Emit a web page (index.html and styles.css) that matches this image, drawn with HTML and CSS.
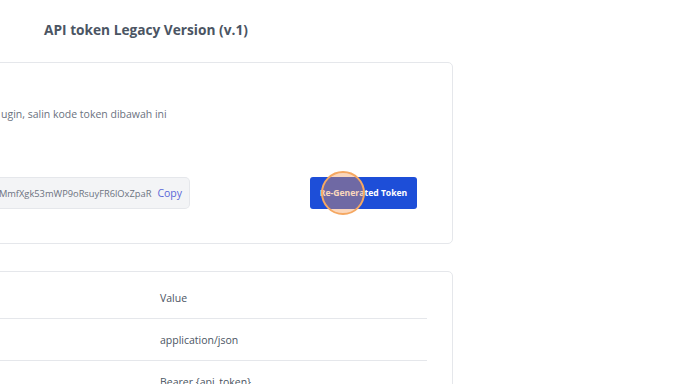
FILE: index.html
```html
<!DOCTYPE html>
<html>
<head>
	<meta charset="utf-8">
	<title>API token Legacy Version</title>
	<link rel="stylesheet" href="styles.css">
</head>
<body>
	<div class="page">
		<h2 class="title">API token Legacy Version (v.1)</h2>
		<div class="card token-card">
			<p class="desc">ugin, salin kode token dibawah ini</p>
			<div class="token-row">
				<div class="token-box">
					<span class="token-text">MmfXgk53mWP9oRsuyFR6lOxZpaR</span>
					<span class="copy">Copy</span>
				</div>
				<button class="btn-regen">Re-Generated Token</button>
			</div>
		</div>
		<div class="card table-card">
			<table class="hdr-table">
				<tr><td class="key"></td><td>Value</td></tr>
				<tr><td class="key"></td><td>application/json</td></tr>
				<tr><td class="key"></td><td>Bearer {api_token}</td></tr>
			</table>
		</div>
	</div>
	<div class="cursor-dot"></div>
</body>
</html>
```
FILE: styles.css
```css
html, body{margin:0; padding:0; background:#fff;}
body{width:688px; height:384px; overflow:hidden; position:relative; font-family:"Open Sans", "Noto Sans", sans-serif; color:#4b5563;}
.page{display:flex; flex-direction:column;}
.title{margin:0; padding:21px 0 0 44px; height:62px; box-sizing:border-box; font-size:13.7px; font-weight:700; color:#4b5563; line-height:18px;}
.card{border:1px solid #e5e7eb; border-radius:5px; margin-left:-10px; width:463px; box-sizing:border-box; background:#fff;}
.token-card{height:182px; padding:0 0 0 10px;}
.desc{margin:0; padding-top:43px; font-size:10.5px; color:#6b7280; line-height:16px;}
.token-row{display:flex; align-items:center; margin-top:55px; margin-left:-10px;}
.token-box{display:flex; align-items:center; justify-content:flex-end; gap:6px; width:199px; height:32px; box-sizing:border-box; background:#f3f4f6; border:1px solid #e5e7eb; border-left:none; border-radius:0 5px 5px 0; padding-right:7px;}
.token-text{font-size:9.3px; color:#6b7280; white-space:nowrap;}
.copy{font-size:10.5px; color:#5a67d8;}
.btn-regen{margin-left:120px; width:107px; height:32px; border:none; border-radius:3px; background:#1d4ed8; color:#fff; font-family:"Open Sans", "Noto Sans", sans-serif; font-size:8.6px; font-weight:700; padding:0;}
.table-card{margin-top:27px; height:140px; padding:5px 25px 0 0;}
.hdr-table{width:100%; border-collapse:collapse; font-size:10.5px; color:#4b5563;}
.hdr-table td{height:41px; border-bottom:1px solid #e5e7eb; padding:0; vertical-align:middle;}
.hdr-table td.key{width:169px;}
.cursor-dot{position:absolute; left:321px; top:171px; width:40px; height:40px; border-radius:50%; background:rgba(245,150,80,0.38); border:2px solid #f5a862;}
```
